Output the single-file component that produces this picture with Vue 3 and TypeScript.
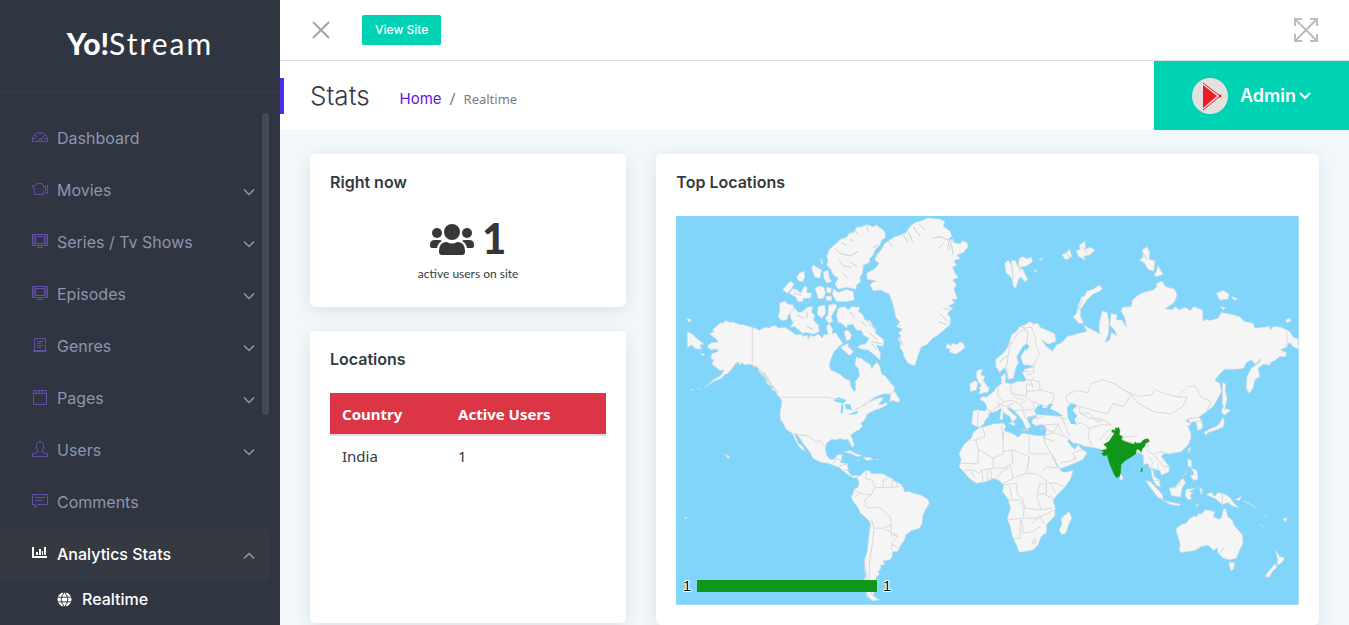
<script setup lang="ts">
interface MenuItem {
  label: string
  icon: string
  expandable?: boolean
}

const menu: MenuItem[] = [
  { label: 'Dashboard', icon: 'M.5 9.500A7.500 6 0 0 1 15.500 9.500V12.500H10.500L9 10H7L5.500 12.500H.5ZM8 3.500V6M3 6L5 8M13 6L9 10M1 9.500H4M12 9.500H15M6 12.500H10' },
  { label: 'Movies', icon: 'M1 4.500H3.500L5 2.500H10L11.500 4.500V6.500L15.500 4.500V12.500L11.500 10.500V13.500H2.500V7.500L.5 6.500V4.500M13.500 7V10', expandable: true },
  { label: 'Series / Tv Shows', icon: 'M.5 1.500H15.500V12.500H.5ZM3.500 3.500H12.500V10.500H3.500ZM5 14.500H11M2 2V12M14 2V12', expandable: true },
  { label: 'Episodes', icon: 'M.5 1.500H15.500V12.500H.5ZM3.500 3.500H12.500V10.500H3.500ZM5 14.500H11M2 2V12M14 2V12', expandable: true },
  { label: 'Genres', icon: 'M2.500 1.500H13.500V14.500H2.500ZM5 4.500H11M5 6.500H9M5 8.500H11M5 10.500H9M1.500 14.500V13M14.500 14.500V13M2 13.500H14', expandable: true },
  { label: 'Pages', icon: 'M1.500 1.500H14.500V15.500H1.500ZM1 4.500H15M4.500 1V4M7.500 1V4M10.500 1V4', expandable: true },
  { label: 'Users', icon: 'M6 10L4.500 7V4Q5 .5 8 .5T11.500 4V7L10 10V11L15.500 13V15.500H.5V13L6 11Z', expandable: true },
  { label: 'Comments', icon: 'M.5 1.500H15.500V11.500H6L3 15V11.500H.5ZM3 4.500H13M3 7.500H10' },
]

const rows = [{ country: 'India', users: 1 }]

// Origins of the six map sectors, in map units.
const sectors: Record<string, [number, number]> = {
  A: [-18, -18],
  B: [552, -18],
  C: [1152, -18],
  D: [-18, 552],
  E: [762, 552],
  F: [1212, 552],
}

// A letter selects a sector, numbers are points in it, and "/" starts a new outline.
function trace(source: string, closed = true): string {
  let [ox, oy] = sectors.A
  let path = ''
  let open = false
  const tokens = source.trim().split(/\s+/)
  for (let i = 0; i < tokens.length; i++) {
    const token = tokens[i]
    if (sectors[token]) {
      ;[ox, oy] = sectors[token]
    } else if (token === '/') {
      if (closed) path += 'Z'
      open = false
    } else {
      path += `${open ? 'L' : 'M'}${Number(token) + ox} ${Number(tokens[++i]) + oy}`
      open = true
    }
  }
  return closed ? path + 'Z' : path
}

const land = trace(`
A 118 372 132 365 128 358 140 350 150 340 160 338 168 332 178 337 190 336 205 343 222 345 247 353 258 356 268 362 280 354 290 352 300 355 304 348 312 350 315 345 325 355 345 352 360 362 378 375 395 372 400 380 412 376 415 390 420 376 430 380 445 372 458 385 462 372 474 375 470 350 478 340 488 358 486 372 498 368 504 380 512 390 518 402 508 408 500 418 492 425 484 444 478 465 482 480 500 488 512 494 525 507 540 512 543 530 552 545 558 540 556 515 568 500 567 478 555 465 560 440 567 445 575 445 585 455 600 462 606 478 615 462 622 458
B 60 470 65 492 78 500 92 520 103 530 103 545 90 552 70 552 48 560 30 577 50 566 70 562 64 574 55 583 68 584 80 577 82 585 60 596 45 600 22 612
D 583 62 572 70 578 78 570 88 558 94 542 105 550 125 553 138 546 142 538 126 534 118 520 119 512 116 500 120 485 118 470 130 466 150 472 170 482 180 495 177 502 165 518 165 514 180 510 188 532 192 535 215 545 228 560 226 568 230
580 218 592 212 600 214 604 222 640 222 652 230 665 235 675 245 692 252 702 268 705 278 715 274 735 282 755 286 775 300 778 312 765 332 758 350 757 370 748 386 725 392 708 405 703 422 690 440 684 455 668 455 667 470 660 480 640 483 644 493 630 498 634 504 625 515 628 524 617 534 622 544 614 560 612 580 610 588 628 600 610 603 592 592 584 570 582 540 588 530 583 505 584 480 592 455 596 420 602 370 590 355 572 340 562 320 548 302 544 290 550 282 552 270 564 262 568 250 562 232 550 234 530 222 518 212 508 202 490 196 475 190 455 188 430 176 422 160 405 138 392 118 380 102 374 102 384 128 398 140 405 154 390 144 378 124 368 102 362 96 350 90 340 70 332 60 330 42 334 20 336 8
A 334 568 320 552 318 545 308 540 305 528 292 522 286 505 270 490 262 470 247 467 240 462 225 465 215 458 210 466 205 455 195 462 190 470 175 490 165 493 155 505 130 515 105 532 130 510 155 495 162 480 150 482 138 472 125 462 132 450 122 445 125 432 145 425 142 418 120 418 112 408 125 398 145 398 140 388 /
A 485 112 505 95 512 88 530 82 538 70 550 68 560 52 575 50 590 44 610 50 620 46 640 60 646 70 645 85 635 90 630 106 615 120 610 135 600 145 598 158 580 165 578 190 570 200 572 215 560 225 558 238 530 232 505 238 495 222 505 205 490 195 484 180 470 165 475 150 470 140 478 120 /
A 490 235 505 248 530 238 550 245 553 270 530 275 500 275 488 255 /
A 360 304 375 295 385 308 398 305 412 292 428 290 425 308 434 315 430 330 445 345 448 365 430 372 410 368 398 370 375 350 360 352 370 338 362 325 /
A 328 280 345 273 352 282 370 285 372 300 355 315 350 330 335 332 324 320 330 300 /
A 358 250 368 236 382 240 392 250 404 228 412 232 410 248 425 250 422 264 400 265 398 275 384 275 378 262 /
A 338 240 350 225 362 214 372 222 365 236 352 250 / A 380 200 390 188 402 184 405 200 398 215 385 212 / A 425 175 430 165 440 172 455 180 450 205 435 202 / A 460 185 475 181 478 205 486 215 470 218 462 205 / A 435 235 447 228 462 232 467 250 460 265 445 266 / A 470 230 485 235 482 250 470 247 / A 468 258 486 260 484 272 470 272 / A 445 290 465 285 467 310 455 325 442 312 / A 476 285 498 282 500 292 484 320 488 335 476 340 466 325 474 315 /
A 505 295 525 290 535 300 545 290 570 292 565 305 580 315 585 330 600 332 610 350 618 358 615 368 630 380 642 390 640 410 618 405 632 430 630 450 610 432 595 420 578 418 562 412 572 405 588 402 598 385 580 375 575 362 560 360 548 342 532 345 530 355 516 340 505 338 500 315 /
A 522 365 534 360 545 375 540 390 530 392 / A 512 412 535 400 535 410 550 425 540 437 528 428 /
A 452 145 460 158 455 162 / A 52 365 70 375 78 384 102 402 90 405 95 418 75 416 65 405 52 412 / A 52 325 65 330 55 337 / A 92 430 105 434 98 438 / A 60 538 72 540 / A 82 535 92 538 /
B 92 552 102 542 120 570 115 577 100 572 90 575 /
B 20 190 35 182 45 176 58 160 45 150 50 135 62 122 75 100 105 80 120 76 138 68 150 50 165 38 185 32 205 24 240 28 255 34 250 48 272 65 275 80 262 90 280 88 282 98 300 102 308 92 322 98 325 110 310 128 290 135 302 145 282 152 290 165 278 172 285 190 295 202 278 210 290 225 282 238 290 258 292 268 275 268 284 278 265 290 280 295 262 310 272 325 270 345 250 362 230 378 218 385 200 405 185 410 175 435 170 452 164 467 145 460 132 440 130 428 120 412 122 400 115 385 125 378 115 370 128 358 110 350 120 336 108 322 100 285 88 252 62 240 40 242 30 225 45 212 22 208 /
B 262 400 275 408 275 400 292 404 300 396 310 400 315 412 305 422 288 432 268 426 272 418 258 414 /
B 435 160 445 150 455 165 455 150 468 154 474 170 478 145 490 140 500 146 515 142 518 155 500 168 480 172 490 180 495 192 504 208 495 215 482 200 475 210 468 235 460 228 458 208 450 198 438 188 / B 538 148 550 144 546 150 / B 522 182 533 180 526 186 /
B 350 485 360 478 368 480 362 494 375 500 370 512 380 525 388 535 385 546 355 552 362 542 358 534 365 528 355 515 350 500 / B 330 522 345 512 354 518 350 540 332 545 /
B 340 603 352 600 375 604 382 595 376 578 360 568 368 560 380 562 388 555 402 545 412 530 425 522 424 500 435 490 438 502 436 518 455 522 475 514 494 515 500 510 488 490 495 478 525 470 510 466 490 464 483 440 495 420 508 412 502 400 488 410 480 425 470 440 476 458 468 475 460 505 445 508 440 485 434 472 420 488 408 470 408 448 430 430 445 410 455 375 470 364 480 350 495 345 510 335 522 342 535 340 540 352 560 360 585 372 588 395 565 402 545 390 560 410 578 424 590 405 602 400
C 10 395 22 380 60 370 82 365 72 345 84 352 120 372 118 350 122 325 128 303 142 308 148 340 146 370 136 398 150 390 155 368 172 378 165 360 150 345 154 310 172 315 170 330 186 330 200 352 194 320 184 305 188 292 215 290 218 270 232 258 250 248 280 240 292 230 290 222 305 212 318 230 345 238 352 255 345 275 318 298 340 298 348 290 358 300 375 292 392 302 402 290 428 300 430 335 440 328 450 332 475 325 485 308 510 312 540 320 555 335 580 340 585 355 630 350 632 360 642 350 665 352 690 365 700 382 716 388 716 418 700 410 690 398 678 412 662 420 680 428 678 440 660 440 645 452 632 458 630 466 612 462 595 475 600 500 585 510 580 535 568 550 560 535 562 500 575 475 602 455 605 445 588 462 575 450 560 458 552 475 530 478 495 478 480 492 465 512 480 520 485 545 475 565 460 590 440 605 420 620
F 360 52 368 72 368 85 354 92 350 68 340 64 333 70 325 58 335 52 318 64 335 72 324 80 333 98 334 115 325 135 305 155 270 162 255 160 244 170 254 182 268 200 268 215 245 226 240 212 225 208 218 205 224 230 238 240 242 262 228 255 218 235 214 210 204 190 192 195 190 165 178 158 168 160 125 190 122 225 110 230 100 215 88 185 80 165 68 160 65 148
E 485 142 465 140 442 130 430 130 418 118 414 124 425 140 435 148 445 135 456 148 472 158 460 178 430 192 390 207 384 195 370 170 345 130 344 115 350 90 346 76 330 74 320 78 306 70 308 58 322 52 318 45 302 50 290 55 303 80 290 88 280 65 268 48 250 30 235 20 234 28 262 52 248 68 240 50 222 38 212 25 200 35 178 38 176 50 166 60 162 72 150 82 136 78 126 72 128 50 /
E 148 84 165 80 190 72 220 70 228 78 222 92 250 102 265 112 278 100 300 104 325 108 340 106 344 125 365 165 380 195 392 212 402 218 430 212 422 238 405 262 382 285 370 300 376 325 375 348 350 375 350 398 334 410 325 435 310 450 290 454 268 457 262 440 248 410 240 375 232 358 242 325 235 298 218 275 222 255 205 240 190 236 165 246 140 250 118 235 104 218 88 202 94 180 88 160 104 132 125 115 130 98 /
E 418 335 426 355 418 370 408 400 396 404 388 390 396 375 394 355 / E 572 222 580 232 576 242 570 238 / E 244 68 256 70 254 78 238 70 / E 214 30 220 38 218 60 210 58 / E 275 90 298 92 / E 332 88 346 84 /
F 290 395 290 385 305 374 320 370 330 355 345 348 350 352 356 342 368 342 375 330 390 332 405 336 400 350 418 358 425 355 432 325 438 328 444 350 458 362 462 375 488 405 490 430 480 450 470 475 450 480 432 475 415 460 412 444 402 452 385 436 365 440 345 452 305 458 298 450 302 435 /
F 447 488 465 488 462 508 453 512 / F 588 452 600 470 615 475 605 490 592 496 594 478 / F 586 492 592 502 578 515 568 532 556 530 572 508 /
F 380 284 395 278 405 290 415 278 440 285 455 298 462 310 478 325 458 318 445 308 428 314 405 295 392 290 / F 466 300 485 290 480 302 / F 268 265 285 262 300 245 308 236 318 248 308 262 302 292 275 286 / F 198 242 212 246 235 270 248 285 250 300 235 292 215 268 / F 248 302 268 306 302 313 300 318 275 315 / F 320 268 347 266 328 275 342 280 332 284 335 298 325 300 316 288 / F 360 262 368 270 364 285 / F 345 318 358 312 350 320 /
F 325 178 334 180 336 202 324 198 / F 335 205 352 212 354 238 342 242 332 228 344 224 / F 310 232 322 212 / F 325 148 332 142 328 160 / F 430 52 434 66 430 82 410 90 385 98 378 106 372 98 395 85 410 80 422 68 / F 430 20 438 26 452 32 435 46 425 36 /
C 488 518 498 522 496 540 502 565 495 600 488 580 / C 40 322 50 310 55 288 65 262 75 258 80 245 100 238 118 225 128 235 118 245 100 252 80 272 62 298 62 320 72 340 56 340 50 330 /
C 240 150 250 142 248 120 262 110 270 130 268 148 285 152 282 184 265 178 255 160 / C 282 196 290 185 295 166 305 185 310 192 292 200 / C 470 250 490 242 508 252 505 268 480 270 / C 514 258 535 268 522 270 / C 482 290 498 294 490 300 /
C 6 134 20 128 30 118 36 140 18 150 / C 50 122 62 118 58 106 76 94 76 118 92 112 105 120 92 134 72 138 76 150 55 138 / C 678 330 690 325 695 334 682 338 /
D 522 156 540 152 555 160 578 168 560 170 545 162 / D 580 172 600 172 610 178 590 182 / D 615 178 625 180 / D 560 180 570 182 / D 165 162 180 172 174 176 / D 42 354 52 352 48 357 / F 248 176 254 178 250 184 / F 540 372 556 384 / F 555 345 562 352 / F 610 358 622 352 618 368 / F 490 302 532 325 516 315
`)

const water = trace(`
E 314 34 322 20 335 12 340 24 350 24 360 12 370 12 360 26 385 38 400 48 385 50 350 46 320 44 /
E 412 22 425 10 438 12 440 20 428 30 442 48 434 58 440 72 424 72 414 52 /
A 490 570 505 562 528 570 522 580 500 576 / A 515 582 520 584 518 612 512 608 / A 524 582 542 584 545 600 530 598 / A 532 615 565 602 560 612 / B 498 404 508 408 500 424
`)

const borders = trace(`
A 247 353 247 467 262 472 280 490 290 510 300 530 / A 334 562 475 562 500 570 512 568 / A 545 605 570 592 605 570 622 570 / B 10 590 35 568 48 560 / D 370 100 390 106 415 108 440 125 452 122 465 140 / D 490 192 498 178 510 178 / D 508 198 532 192 / D 520 210 536 212 /
D 590 216 586 235 608 242 614 262 605 285 585 300 588 322 606 325 625 320 660 350 665 375 640 385 612 385 605 360 / D 552 270 575 282 605 285 / D 552 292 570 280 / D 614 262 640 264 640 240 655 235 / D 642 264 662 262 690 260 698 252 / D 665 260 668 240 / D 682 262 680 247 / D 612 385 608 430 600 480 598 520 598 570 610 590 / D 640 385 680 405 665 410 662 372 / D 680 405 682 412 665 430 665 450 / D 664 430 685 445 /
B 445 510 440 470 450 410 470 375 490 360 505 365 / B 505 365 500 402 / B 490 355 515 352 522 342 / B 515 352 525 380 530 410 540 430 522 465 / B 500 495 522 490 520 468 / B 488 485 510 485 / B 500 510 515 510 525 500 / B 452 522 455 550 500 560 500 520 / B 500 520 520 530 510 510 540 515 540 540 500 545 / B 500 560 515 575 560 590 582 570 580 550 540 540 / B 415 530 415 560 430 575 420 585 400 600 / B 430 575 460 572 480 585 500 570 / B 415 582 440 590 460 580 / B 440 590 462 602 490 600 485 585 / B 490 600 525 600 520 580 / B 455 550 470 565 490 568 / B 490 600 495 625 / B 505 620 530 622 /
E 145 35 143 78 / E 170 28 190 38 / E 205 5 210 22 / E 320 58 345 45 380 48 410 58 / E 345 75 385 72 395 95 400 105 420 118 / E 350 105 370 100 385 72 / E 352 90 366 96 400 110 / E 345 115 375 125 / E 390 190 435 180 440 170 / E 435 180 430 160 455 150 / E 395 50 410 85 420 110 / E 435 75 455 68 480 85 475 110 485 135 / E 480 85 510 75 545 75 / E 450 40 480 40 500 65 520 60 545 75 / E 510 122 530 95 550 88 /
C 20 555 50 542 85 548 95 520 130 510 165 522 215 555 190 590 160 580 145 612 115 605 60 590 20 575 20 555 / C 165 520 190 540 235 560 275 555 285 540 320 552 355 562 382 562 370 590 330 612 280 605 235 580 215 555 / C 355 560 385 530 405 528 425 562 455 575 440 605 / C 60 590 60 610 90 625 130 628 / C 682 365 682 418 /
F 320 58 362 52 / F 348 65 370 62 / F 168 108 128 112 128 120 165 132 / F 205 120 205 155 225 165 240 155 255 158 / F 205 170 218 185 215 210 / F 225 168 240 185 250 200 265 200 / F 235 190 235 208 / F 78 120 100 95 122 92 / F 222 242 236 242 / F 270 265 290 262 305 248 / F 428 283 428 314 /
E 160 82 165 110 138 120 128 122 / E 138 120 145 148 145 192 92 190 / E 145 148 190 175 220 162 220 120 215 75 / E 222 95 220 120 / E 220 155 250 150 298 170 295 195 / E 298 104 298 162 358 162 / E 245 150 250 190 220 205 188 205 / E 190 175 190 205 160 210 145 220 130 210 105 212 / E 298 170 290 220 320 222 360 250 380 250 400 260 / E 245 205 250 235 290 220 / E 250 235 218 252 / E 340 215 350 200 385 205 / E 222 255 260 250 262 282 280 300 285 325 335 330 320 290 330 250 / E 235 300 270 300 282 325 282 355 232 360 / E 240 260 245 290 / E 285 355 320 355 345 345 375 330 / E 272 360 270 415 250 415 / E 275 360 280 400 310 395 330 380 / E 305 372 330 350 345 375 / E 330 255 350 250 350 280 325 285 / E 345 285 370 295 / E 360 250 378 280 / E 335 330 370 325 / E 155 210 160 245 / E 172 208 175 242 / E 120 210 135 235 / E 182 208 185 238 / E 308 422 318 420 318 430 308 430 308 422 / E 200 235 222 210 245 200
`, false)

const inlets = trace(`
A 495 115 510 130 540 138 565 125 / A 555 60 565 75 / A 590 48 595 62 / A 610 112 625 105 / A 508 150 520 168 545 172 / A 540 155 560 170 / A 520 190 532 205 / A 540 88 552 94 / A 515 98 530 105 / A 380 315 405 325 / A 410 305 412 325 / A 410 350 430 358 / A 370 250 395 256 / A 540 305 555 325 / A 575 335 592 350 / A 600 370 622 390 / A 605 400 618 418 / A 545 405 560 420 / A 270 485 310 530 325 550 / A 280 485 315 540 / A 205 460 175 488 /
B 85 95 98 110 / B 130 75 145 98 / B 145 65 158 95 / B 160 50 180 78 / B 178 42 195 60 / B 218 85 240 80 270 92 262 112 / B 265 120 278 90 / B 275 105 280 135 / B 250 100 235 115 / B 30 210 52 215 / B 240 312 268 338 / B 250 295 272 300 / B 235 335 262 345 / B 108 335 122 350 / B 120 382 128 405 / B 455 155 460 205 / B 475 150 480 185 / B 420 455 445 435 / B 440 395 458 400 / B 482 348 500 358 / B 10 320 45 360 / B 35 395 68 402 / C 318 295 342 280 / C 245 120 262 150 / C 65 110 85 130 / C 20 130 30 142 / C 55 300 68 270 / D 582 480 590 530 585 570 600 600 / F 432 445 420 460
`, false)

const india = trace(`
F 65 152 82 148 80 140 72 134 88 125 102 104 104 98 96 96 98 90 108 92 106 84 113 86 116 82 120 92 118 105 128 110 124 118 132 124 150 130 164 134 166 126 170 130 182 130 192 120 204 117 209 124 198 130 194 140 188 145 184 157 178 148 170 148 168 162 150 174 136 182 124 194 122 220 118 230 110 233 102 220 90 192 82 165 72 168 66 160 74 158 / F 188 204 186 215 183 214
`)
</script>

<template>
  <div class="app">
    <aside class="sidebar">
      <div class="brand"><b>Yo!</b><span>Stream</span></div>
      <nav class="menu" aria-label="Main">
        <a v-for="item in menu" :key="item.label" href="#" class="item">
          <svg class="icon" viewBox="0 0 16 16" aria-hidden="true"><path :d="item.icon" /></svg>
          <span>{{ item.label }}</span>
          <svg v-if="item.expandable" class="arrow" viewBox="0 0 24 16" aria-hidden="true"><path d="M2 3L12 13L22 3" /></svg>
        </a>
        <a href="#" class="item active">
          <svg class="icon solid" viewBox="0 0 16 16" aria-hidden="true"><path d="M0 2H2V11H15V13H0ZM4 7H6V10H4ZM7 4H9V10H7ZM10 6H11V10H10ZM12 2H14V10H12Z" /></svg>
          <span>Analytics Stats</span>
          <svg class="arrow" viewBox="0 0 24 16" aria-hidden="true"><path d="M2 13L12 3L22 13" /></svg>
        </a>
        <a href="#" class="item sub">
          <svg class="globe" viewBox="0 0 16 16" aria-hidden="true">
            <circle cx="8" cy="8" r="8" />
            <path d="M0 5.500H16M0 10.500H16M8 0Q1 8 8 16M8 0Q15 8 8 16" fill="none" />
          </svg>
          <span>Realtime</span>
        </a>
        <span class="scroll-thumb"></span>
      </nav>
    </aside>

    <div class="main">
      <header class="topbar">
        <button class="plain" type="button" aria-label="Close menu">
          <svg class="close" viewBox="0 0 18 18"><path d="M1 1L17 17M17 1L1 17" /></svg>
        </button>
        <a class="view-site" href="#">View Site</a>
        <button class="plain expand-button" type="button" aria-label="Full screen">
          <svg class="expand" viewBox="0 0 26 26"><path d="M2 2L24 24M24 2L2 24M2 9V2H9M17 2H24V9M24 17V24H17M9 24H2V17" /></svg>
        </button>
      </header>

      <div class="titlebar">
        <span class="marker"></span>
        <h1>Stats</h1>
        <nav class="crumbs" aria-label="Breadcrumb">
          <a href="#">Home</a><span class="slash">/</span><span>Realtime</span>
        </nav>
        <button class="account" type="button">
          <svg class="avatar" viewBox="0 0 36 36" aria-hidden="true">
            <circle cx="18" cy="18" r="18" fill="#e3e0df" />
            <path d="M11 7L25 18L11 30Z" fill="#ed1c24" />
            <path d="M11 5L27 17M11 32L27 19" stroke="#ed1c24" fill="none" />
            <circle cx="28" cy="18" r="1.500" fill="#ed1c24" />
          </svg>
          <span>Admin</span>
          <svg class="caret" viewBox="0 0 12 8" aria-hidden="true"><path d="M1 1L6 6L11 1" /></svg>
        </button>
      </div>

      <main class="content">
        <div class="column">
          <section class="card now">
            <h2>Right now</h2>
            <div class="count">
              <svg class="people" viewBox="0 0 44 32" aria-hidden="true">
                <circle cx="22" cy="8" r="8" />
                <circle cx="7" cy="9" r="5" />
                <circle cx="37" cy="9" r="5" />
                <path d="M9 27Q9 18 17 18Q22 21 27 18Q35 18 35 27V28Q35 31 32 31H12Q9 31 9 28ZM0 21Q0 16 5 16H9Q11 16 12 17Q8 19 7 24H2Q0 24 0 22ZM44 21Q44 16 39 16H35Q33 16 32 17Q36 19 37 24H42Q44 24 44 22Z" />
              </svg>
              <strong>1</strong>
            </div>
            <p>active users on site</p>
          </section>
          <section class="card locations">
            <h2>Locations</h2>
            <table>
              <thead>
                <tr><th scope="col">Country</th><th scope="col">Active Users</th></tr>
              </thead>
              <tbody>
                <tr v-for="row in rows" :key="row.country"><td>{{ row.country }}</td><td>{{ row.users }}</td></tr>
              </tbody>
            </table>
          </section>
        </div>
        <div class="column wide">
          <section class="card">
            <h2>Top Locations</h2>
            <div class="map">
              <svg viewBox="0 0 1869 1167" role="img" aria-label="World map of active users">
                <rect width="1869" height="1167" fill="#81d4fa" />
                <path class="land" :d="land" />
                <path class="water" :d="water" />
                <path class="border" :d="borders" />
                <path class="border inlet" :d="inlets" />
                <path class="india" :d="india" />
              </svg>
              <div class="legend"><span>1</span><i></i><span>1</span></div>
            </div>
          </section>
        </div>
      </main>
    </div>
  </div>
</template>

<style>
body {
  margin: 0;
}
</style>

<style scoped>
* {
  box-sizing: border-box;
}
.app {
  display: flex;
  height: 100vh;
  overflow: hidden;
  background: #f2f7fa;
  color: #343a40;
  font-family: Inter, "Open Sans", sans-serif;
}
a {
  color: inherit;
  text-decoration: none;
}
svg {
  display: block;
  flex: none;
}
.sidebar {
  width: 280px;
  flex: none;
  overflow: hidden;
  background: #303641;
}
.brand {
  display: flex;
  align-items: center;
  justify-content: center;
  height: 93px;
  padding-bottom: 6px;
  border-bottom: 1px solid #383e49;
  color: #fff;
  font: 400 30px/36px Lato, sans-serif;
}
.brand b {
  font-weight: 900;
}
.brand span {
  letter-spacing: 2px;
}
.menu {
  position: relative;
  padding: 20px 10px 0 0;
}
.item {
  display: flex;
  align-items: center;
  gap: 9px;
  height: 52px;
  padding: 0 15px 2px 32px;
  border-radius: 0 4px 4px 0;
  color: #8c95ae;
  font-size: 16px;
}
.icon {
  width: 16px;
  height: 16px;
  margin-bottom: 2px;
  fill: none;
  stroke: #644fa6;
}
.arrow {
  width: 12px;
  height: 8px;
  margin: 4px 0 0 auto;
  fill: none;
  stroke: #9299a8;
  stroke-width: 3;
}
.active,
.sub {
  color: #fff;
  font-weight: 500;
}
.active {
  background: #353941;
}
.solid {
  fill: #fff;
  stroke: none;
}
.sub {
  height: 38px;
  padding-left: 57px;
  gap: 10px;
}
.globe {
  width: 15px;
  height: 15px;
  fill: #fff;
  stroke: #303641;
}
.scroll-thumb {
  position: absolute;
  top: 20px;
  right: 11px;
  width: 7px;
  height: 302px;
  border-radius: 4px;
  background: #454b56;
}
.main {
  flex: 1;
  min-width: 0;
}
.topbar {
  display: flex;
  align-items: center;
  height: 61px;
  padding: 0 30px 0 32px;
  border-bottom: 1px solid #dbe1e5;
  background: #fff;
}
.plain {
  padding: 0;
  border: 0;
  background: none;
}
.close {
  width: 18px;
  height: 18px;
  fill: none;
  stroke: #a5a5a5;
  stroke-width: 2;
}
.view-site {
  margin-left: 32px;
  padding: 0 13px;
  border-radius: 2px;
  background: #00d2b4;
  color: #fff;
  font-size: 12px;
  font-weight: 500;
  line-height: 30px;
}
.expand-button {
  margin-left: auto;
}
.expand {
  width: 26px;
  height: 26px;
  fill: none;
  stroke: #b9bcc3;
  stroke-width: 2;
}
.titlebar {
  display: flex;
  align-items: center;
  height: 69px;
  background: #fff;
}
.marker {
  width: 4px;
  height: 36px;
  background: #4531e8;
}
h1 {
  margin: 0 30px 0 26px;
  font-size: 26px;
  font-weight: 300;
  line-height: 32px;
}
.crumbs {
  display: flex;
  align-items: center;
  gap: 8px;
  padding-top: 6px;
  color: #777e85;
  font: 400 13px/24px "Noto Sans", sans-serif;
}
.crumbs a {
  color: #6414dc;
  font: 400 15px/24px Inter, sans-serif;
}
.slash {
  font-size: 16px;
}
.account {
  display: flex;
  align-items: center;
  justify-content: flex-end;
  width: 195px;
  height: 69px;
  margin-left: auto;
  padding: 0 38px 0 0;
  border: 0;
  background: #00d2b4;
  color: #fff;
  font: 600 18px/24px Inter, sans-serif;
}
.avatar {
  width: 36px;
  height: 36px;
  margin-right: 12px;
}
.caret {
  width: 12px;
  height: 8px;
  margin-left: 3px;
  fill: none;
  stroke: #fff;
  stroke-width: 2;
}
.content {
  display: flex;
  padding: 24px 15px;
}
.column {
  display: flex;
  flex-direction: column;
  gap: 24px;
  width: 33.333%;
  padding: 0 15px;
}
.wide {
  width: 66.667%;
}
.card {
  padding: 16px 20px 20px;
  border-radius: 5px;
  background: #fff;
  box-shadow: 0 4px 16px rgba(50, 70, 80, 0.12);
}
h2 {
  margin: 0 0 22px;
  font-size: 16px;
  font-weight: 600;
  line-height: 24px;
}
.now {
  min-height: 153px;
}
.count {
  display: flex;
  align-items: center;
  justify-content: center;
  gap: 8px;
  height: 48px;
  color: #373737;
  font: 700 42px/44px Lato, sans-serif;
}
.count strong {
  padding-bottom: 4px;
}
.people {
  width: 44px;
  height: 32px;
  fill: #373737;
}
p {
  margin: 0;
  text-align: center;
  font: 400 12px/20px Lato, sans-serif;
}
.locations {
  min-height: 292px;
}
table {
  width: 100%;
  border-collapse: collapse;
  font: 400 15px/24px "Noto Sans", sans-serif;
}
th,
td {
  padding: 8px 12px;
  text-align: left;
}
th {
  height: 42px;
  border-bottom: 2px solid #e6dadd;
  background: #dc3545;
  color: #fff;
  font-weight: 700;
}
th:first-child {
  width: 42%;
}
.map {
  position: relative;
}
.map svg {
  width: 100%;
  height: auto;
}
.land {
  fill: #f5f5f5;
  stroke: #d5dcdf;
  stroke-width: 2;
  stroke-linejoin: round;
}
.water {
  fill: #81d4fa;
}
.border {
  fill: none;
  stroke: #d9d9d9;
  stroke-width: 3;
  stroke-linejoin: round;
}
.inlet {
  stroke: #c9d2d4;
}
.india {
  fill: #109618;
  stroke: #109618;
  stroke-width: 2;
}
.legend {
  position: absolute;
  left: 7px;
  bottom: 11px;
  display: flex;
  align-items: center;
  gap: 6px;
  color: #000;
  font: 400 14px/16px "Liberation Sans", Arial, sans-serif;
  text-shadow: 1px 1px #fff, -1px -1px #fff, 1px -1px #fff, -1px 1px #fff;
}
.legend i {
  width: 180px;
  height: 12px;
  background: #109618;
}
</style>
